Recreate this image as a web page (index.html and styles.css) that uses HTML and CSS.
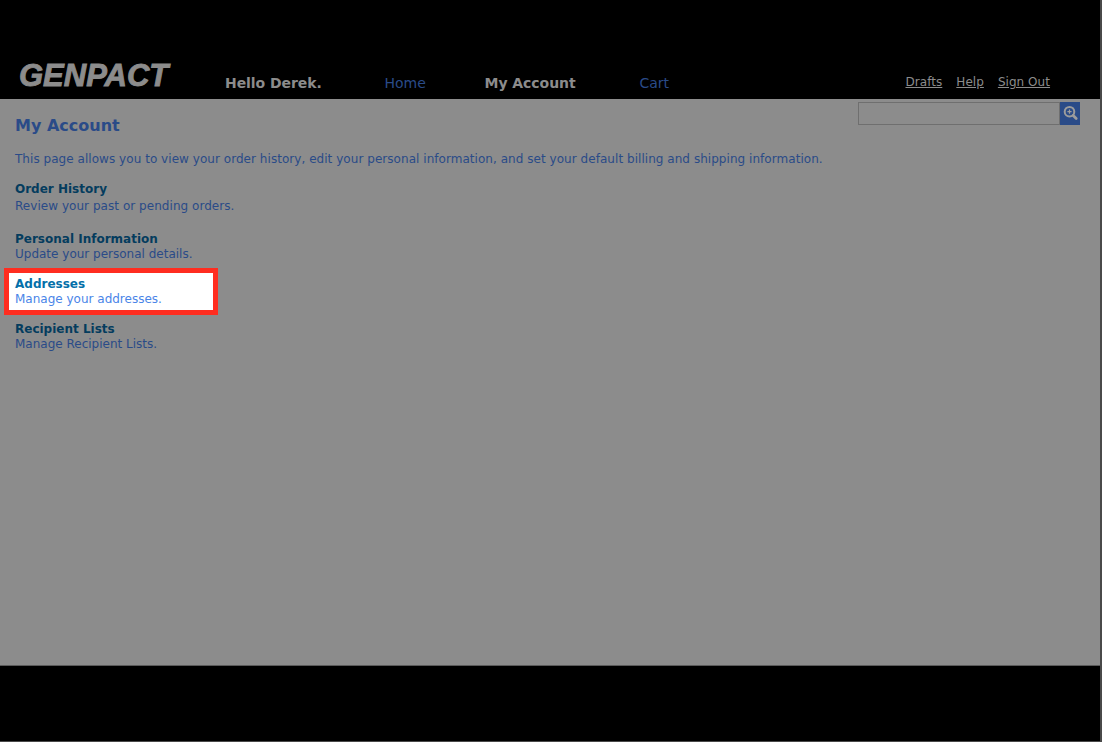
FILE: index.html
```html
<!DOCTYPE html>
<html lang="en">
<head>
<meta charset="utf-8">
<title>My Account</title>
<link rel="stylesheet" href="styles.css">
</head>
<body>
<div class="page">
  <header class="topbar">
    <div class="logo">GENPACT</div>
    <div class="hello nav-b">Hello Derek.</div>
    <a class="nav-link home">Home</a>
    <a class="nav-b account">My Account</a>
    <a class="nav-link cart">Cart</a>
    <nav class="util">
      <a>Drafts</a>
      <a>Help</a>
      <a>Sign Out</a>
    </nav>
  </header>
  <main class="content">
    <div class="search">
      <div class="search-input"></div>
      <div class="search-btn">
        <svg width="20" height="23" viewBox="0 0 20 23">
          <circle cx="9.5" cy="9.7" r="4.8" fill="none" stroke="#9c9c9c" stroke-width="2"/>
          <path d="M7.4 9.7h4.2M9.5 7.6v4.2" stroke="#9c9c9c" stroke-width="1.2"/>
          <path d="M13.2 13.5l3 3" stroke="#9c9c9c" stroke-width="2.8" stroke-linecap="round"/>
        </svg>
      </div>
    </div>
    <h1 class="title">My Account</h1>
    <p class="intro">This page allows you to view your order history, edit your personal information, and set your default billing and shipping information.</p>
    <div class="item first">
      <div class="item-title">Order History</div>
      <div class="item-desc gap">Review your past or pending orders.</div>
    </div>
    <div class="item second">
      <div class="item-title">Personal Information</div>
      <div class="item-desc">Update your personal details.</div>
    </div>
    <div class="item active">
      <div class="item-title">Addresses</div>
      <div class="item-desc">Manage your addresses.</div>
    </div>
    <div class="item last">
      <div class="item-title">Recipient Lists</div>
      <div class="item-desc">Manage Recipient Lists.</div>
    </div>
  </main>
  <footer class="footer"></footer>
</div>
</body>
</html>
```
FILE: styles.css
```css
* { box-sizing: border-box; }
html, body { margin: 0; padding: 0; background: #4a4a4a; }
body { font-family: "DejaVu Sans", Verdana, sans-serif; font-size: 12px; }
.page { width: 1100px; height: 741px; display: flex; flex-direction: column; background: #000; }
.topbar { height: 99px; padding: 0 0 7px 19px; display: flex; align-items: flex-end; color: #8c8c8c; }
.logo { width: 206px; font-family: "Liberation Sans", Arial, sans-serif; font-style: italic; font-weight: 700; font-size: 31px; line-height: 32px; position: relative; top: 0; color: #8c8c8c; -webkit-text-stroke: 0.9px #8c8c8c; }
.nav-b { font-weight: 700; font-size: 14px; line-height: 17px; letter-spacing: -0.05px; color: #8c8c8c; }
.nav-link { font-size: 14px; line-height: 17px; color: #2a4b88; }
.hello { width: 159.5px; }
.home { width: 100px; }
.account { width: 155px; }
.cart { width: 266px; }
.util { display: flex; gap: 14px; font-size: 12px; line-height: 17px; letter-spacing: 0.05px; position: relative; top: -1px; }
.util a { color: #8c8c8c; text-decoration: underline; }
.content { height: 566px; background: #8c8c8c; padding: 0 0 0 15px; position: relative; }
.search { position: absolute; top: 3px; right: 20px; display: flex; height: 23px; }
.search-input { width: 202px; border: 1px solid #6f6f6f; background: #8c8c8c; }
.search-btn { width: 20px; background: #2a4b88; }
.search-btn svg { display: block; }
.title { margin: 0; padding-top: 17px; font-size: 16px; line-height: 19px; font-weight: 700; color: #2a4b88; }
.intro { margin: 17px 0 0; font-size: 12px; line-height: 15px; letter-spacing: 0.043px; color: #2a4b88; }
.item { font-size: 12px; }
.item-title { font-weight: 700; line-height: 15px; color: #043c5e; }
.item-desc { line-height: 15px; color: #2a4b88; }
.item-desc.gap { margin-top: 2px; letter-spacing: 0.043px; }
.first { margin-top: 15px; }
.second { margin-top: 18px; }
.active { width: 214px; margin: 6px 0 0 -11px; padding: 4px 6px 3px 6px; background: #fff; border: 5px solid #ff2d20; }
.active .item-title { color: #046fa9; }
.active .item-desc { color: #4a85e8; }
.last { margin-top: 7px; }
.footer { height: 75px; border-top: 1px solid #5a5a5a; background: #000; }
```
